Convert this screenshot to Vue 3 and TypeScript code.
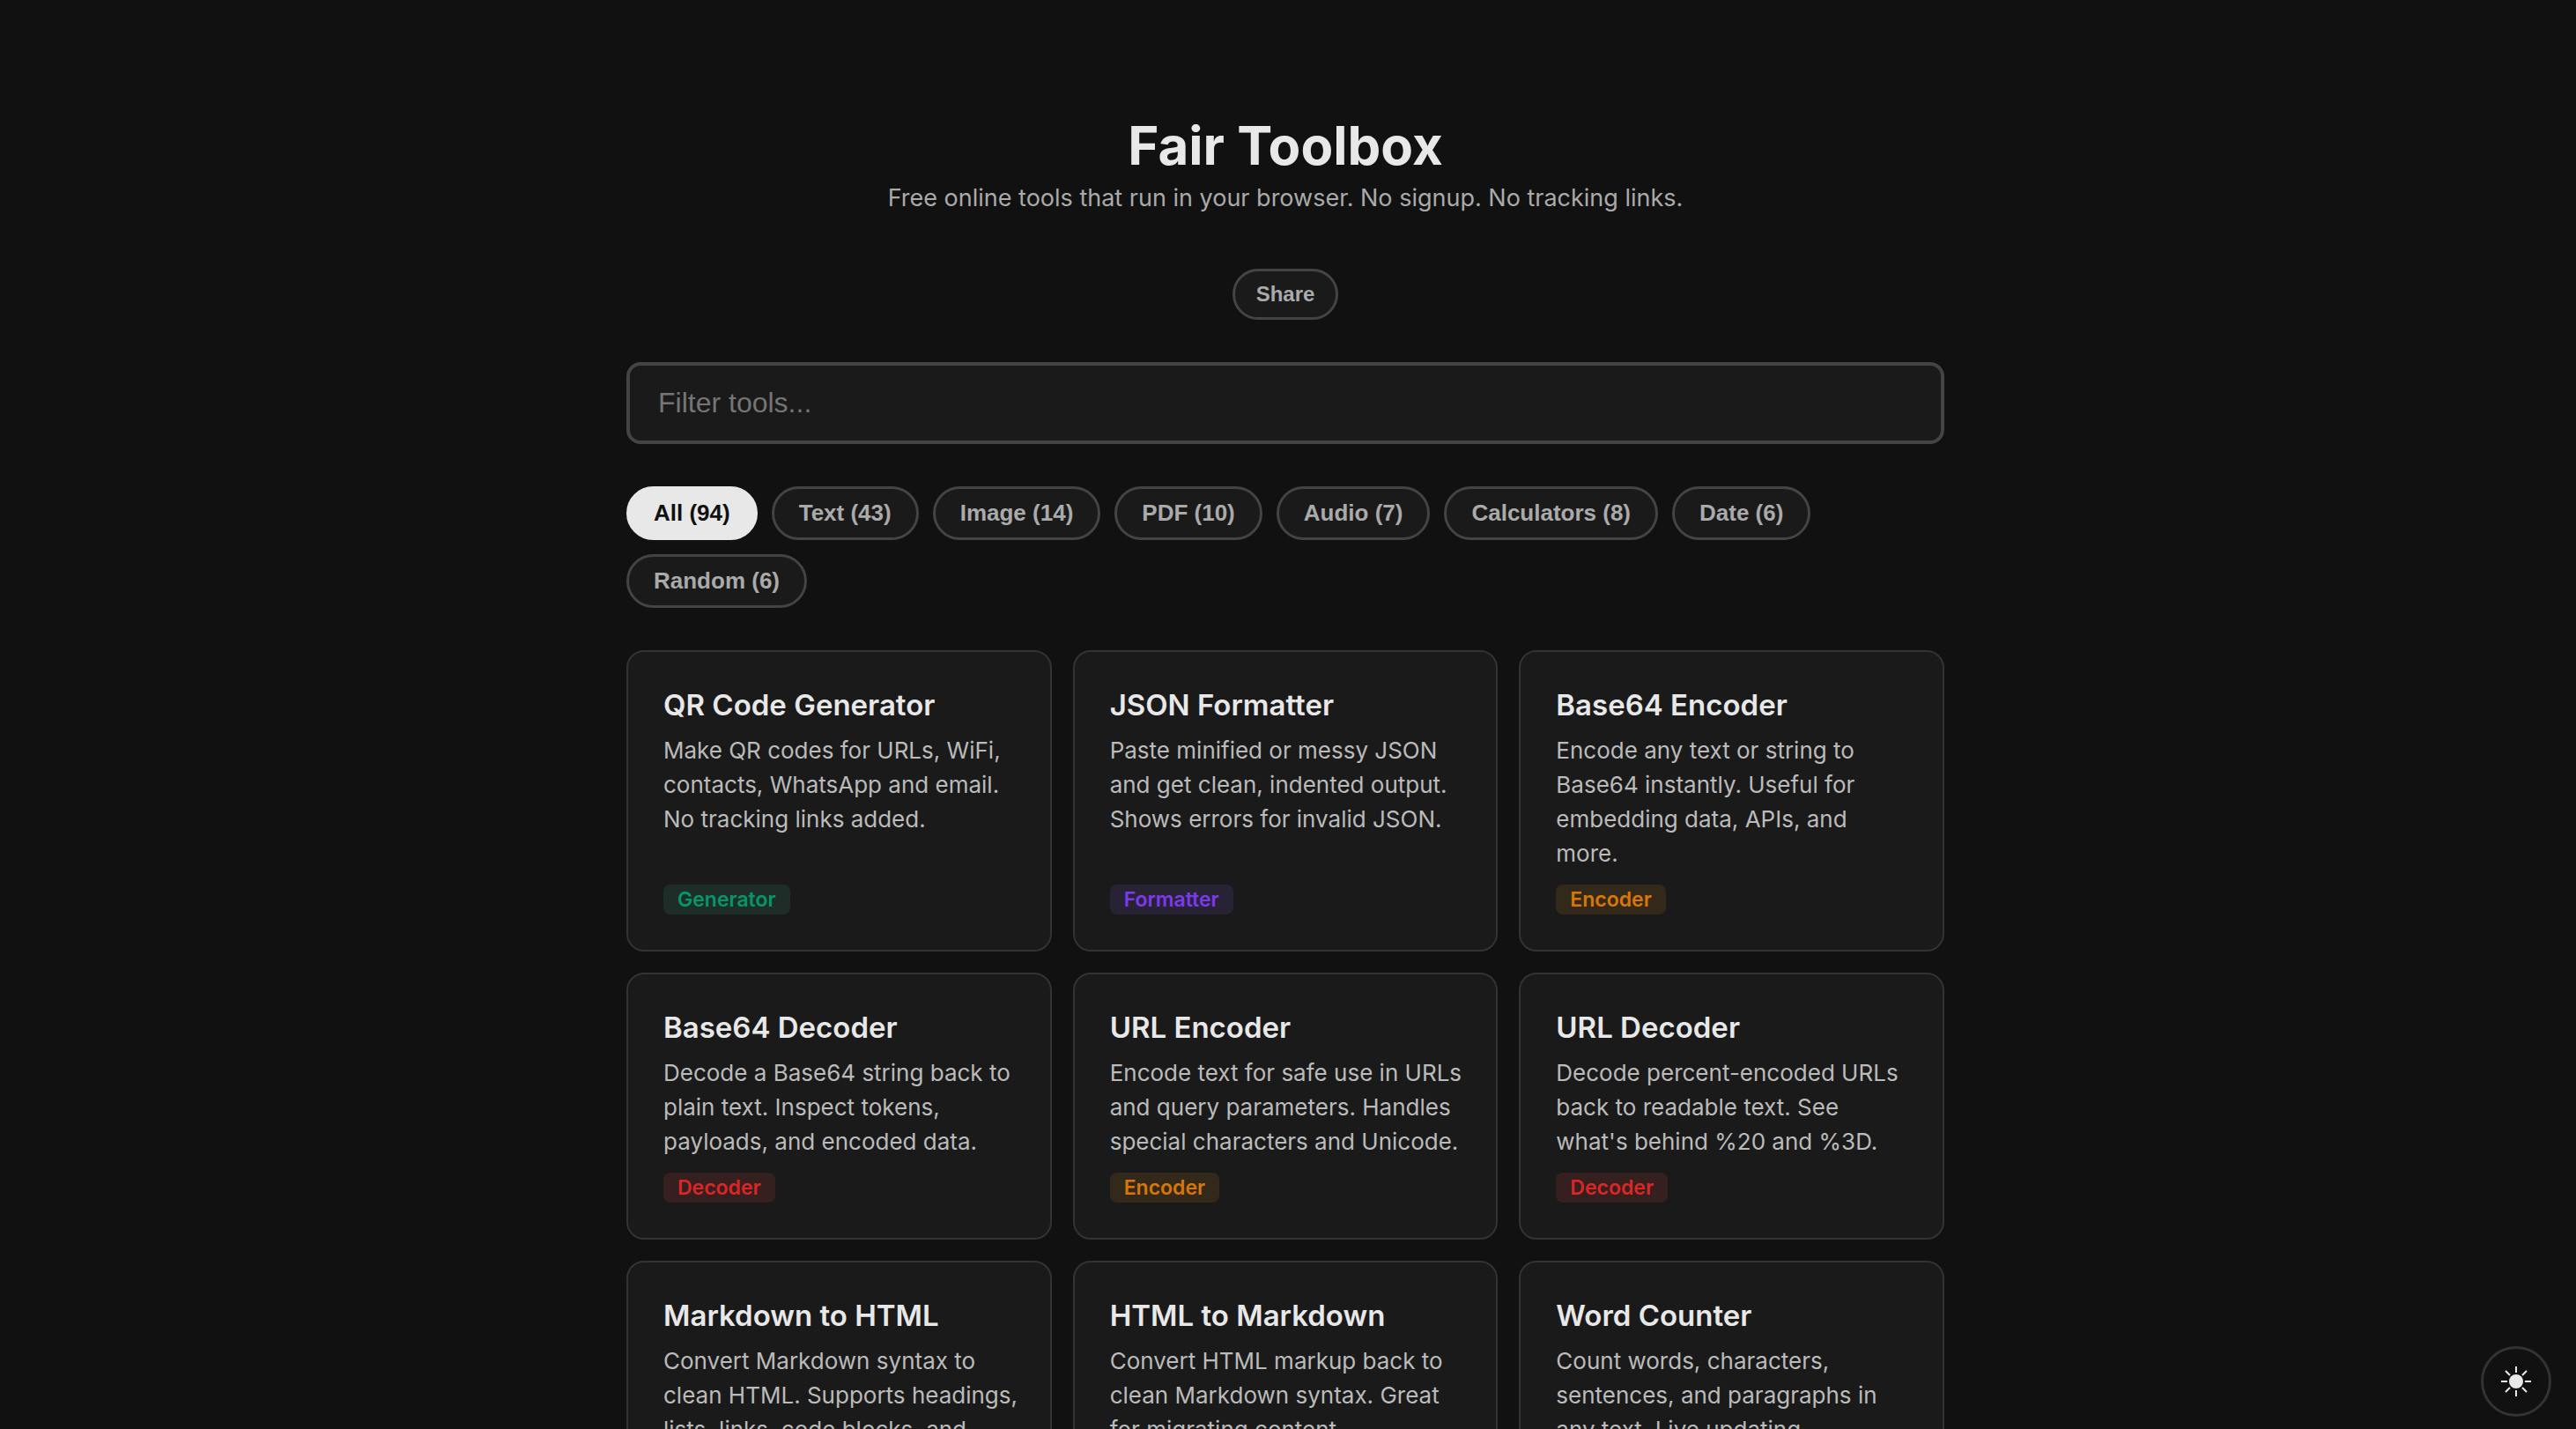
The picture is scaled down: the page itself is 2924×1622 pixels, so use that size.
<script setup lang="ts">
import { computed, ref } from 'vue'

type Kind = 'generator' | 'formatter' | 'encoder' | 'decoder' | 'converter' | 'counter'

interface Tool {
  name: string
  text: string
  badge: string
  kind: Kind
}

interface Category {
  label: string
  count: number
}

const categories: Category[] = [
  { label: 'All', count: 94 },
  { label: 'Text', count: 43 },
  { label: 'Image', count: 14 },
  { label: 'PDF', count: 10 },
  { label: 'Audio', count: 7 },
  { label: 'Calculators', count: 8 },
  { label: 'Date', count: 6 },
  { label: 'Random', count: 6 },
]

const tools: Tool[] = [
  { name: 'QR Code Generator', text: 'Make QR codes for URLs, WiFi, contacts, WhatsApp and email. No tracking links added.', badge: 'Generator', kind: 'generator' },
  { name: 'JSON Formatter', text: 'Paste minified or messy JSON and get clean, indented output. Shows errors for invalid JSON.', badge: 'Formatter', kind: 'formatter' },
  { name: 'Base64 Encoder', text: 'Encode any text or string to Base64 instantly. Useful for embedding data, APIs, and more.', badge: 'Encoder', kind: 'encoder' },
  { name: 'Base64 Decoder', text: 'Decode a Base64 string back to plain text. Inspect tokens, payloads, and encoded data.', badge: 'Decoder', kind: 'decoder' },
  { name: 'URL Encoder', text: 'Encode text for safe use in URLs and query parameters. Handles special characters and Unicode.', badge: 'Encoder', kind: 'encoder' },
  { name: 'URL Decoder', text: "Decode percent-encoded URLs back to readable text. See what's behind %20 and %3D.", badge: 'Decoder', kind: 'decoder' },
  { name: 'Markdown to HTML', text: 'Convert Markdown syntax to clean HTML. Supports headings, lists, links, code blocks, and more.', badge: 'Converter', kind: 'converter' },
  { name: 'HTML to Markdown', text: 'Convert HTML markup back to clean Markdown syntax. Great for migrating content.', badge: 'Converter', kind: 'converter' },
  { name: 'Word Counter', text: 'Count words, characters, sentences, and paragraphs in any text. Live updating.', badge: 'Counter', kind: 'counter' },
]

const query = ref('')
const active = ref('All')

const visible = computed(() => {
  const q = query.value.trim().toLowerCase()
  return tools.filter((t) => `${t.name} ${t.text}`.toLowerCase().includes(q))
})
</script>

<template>
  <div class="page">
    <main class="container">
      <header class="head">
        <h1>Fair Toolbox</h1>
        <p>Free online tools that run in your browser. No signup. No tracking links.</p>
        <button type="button" class="share">Share</button>
      </header>

      <input v-model="query" class="search" type="text" placeholder="Filter tools..." aria-label="Filter tools" />

      <nav class="chips" aria-label="Categories">
        <button
          v-for="c in categories"
          :key="c.label"
          type="button"
          class="chip"
          :class="{ active: active === c.label }"
          :aria-pressed="active === c.label"
          @click="active = c.label"
        >{{ c.label }} ({{ c.count }})</button>
      </nav>

      <section class="grid">
        <a v-for="t in visible" :key="t.name" href="#" class="card">
          <h2>{{ t.name }}</h2>
          <p>{{ t.text }}</p>
          <span class="badge" :class="t.kind">{{ t.badge }}</span>
        </a>
      </section>
    </main>

    <button type="button" class="theme" aria-label="Toggle theme">
      <svg viewBox="-18 -18 36 36" width="36" height="36" aria-hidden="true">
        <circle r="8" fill="#e8e8e8" />
        <path
          d="M0-17V-10M0 10V17M-17 0H-10M10 0H17M-12-12L-7-7M7 7L12 12M-12 12L-7 7M7-7L12-12"
          stroke="#e8e8e8"
          stroke-width="2"
          fill="none"
        />
      </svg>
    </button>
  </div>
</template>

<style>
body {
  background: #111;
}
</style>

<style scoped>
* {
  box-sizing: border-box;
}

.page {
  padding: 130px 38px 96px 32px;
  background: #111;
  color: #e8e8e8;
  font-family: Inter, 'Liberation Sans', sans-serif;
}

.container {
  max-width: 1496px;
  margin: 0 auto;
}

.head {
  display: flex;
  flex-direction: column;
  align-items: center;
  margin-bottom: 48px;
  text-align: center;
}

h1 {
  margin: 0;
  font-size: 60px;
  font-weight: 700;
  line-height: 70px;
}

.head p {
  margin: 4px 0 60px;
  color: #aaa;
  font-size: 27px;
  line-height: 41px;
}

button {
  cursor: pointer;
}

.share,
.chip {
  border: 3px solid #444;
  border-radius: 32px;
  background: #1a1a1a;
  color: #aaa;
  font-family: 'Liberation Sans', Arial, sans-serif;
  font-weight: 700;
}

.share {
  padding: 12px 24px;
  font-size: 24px;
  line-height: 28px;
}

.search {
  display: block;
  width: 100%;
  margin-bottom: 48px;
  padding: 24px 32px;
  border: 4px solid #444;
  border-radius: 16px;
  outline: none;
  background: #1a1a1a;
  color: #e8e8e8;
  font-family: 'Liberation Sans', Arial, sans-serif;
  font-size: 32px;
  line-height: 37px;
}

.search::placeholder {
  color: #757575;
}

.chips {
  display: flex;
  flex-wrap: wrap;
  gap: 16px;
  margin-bottom: 48px;
}

.chip {
  padding: 13px 28px;
  font-size: 26px;
  line-height: 29px;
}

.chip.active {
  border-color: #e8e8e8;
  background: #e8e8e8;
  color: #111;
}

.grid {
  display: grid;
  grid-template-columns: repeat(3, 1fr);
  gap: 24px;
}

.card {
  display: flex;
  flex-direction: column;
  align-items: flex-start;
  padding: 40px 36px 40px 40px;
  border: 2px solid #333;
  border-radius: 20px;
  background: #1a1a1a;
  color: inherit;
  text-decoration: none;
}

h2 {
  margin: 0 0 12px;
  font-size: 33px;
  font-weight: 600;
  line-height: 40px;
}

.card p {
  margin: 0 0 16px;
  color: #bbb;
  font-size: 26px;
  line-height: 39px;
}

.badge {
  margin-top: auto;
  padding: 3px 16px;
  border-radius: 8px;
  font-size: 23px;
  font-weight: 600;
  line-height: 28px;
}

.generator {
  background: #1f2d29;
  color: #059669;
}

.formatter {
  background: #282334;
  color: #7c3aed;
}

.encoder {
  background: #33291b;
  color: #d97706;
}

.decoder {
  background: #35201f;
  color: #dc2626;
}

.converter {
  background: #1c2636;
  color: #2563eb;
}

.counter {
  background: #1a2c30;
  color: #0891b2;
}

.theme {
  position: fixed;
  right: 28px;
  bottom: 14px;
  display: flex;
  align-items: center;
  justify-content: center;
  width: 80px;
  height: 80px;
  padding: 0;
  border: 3px solid #333;
  border-radius: 50%;
  background: #111;
}
</style>
